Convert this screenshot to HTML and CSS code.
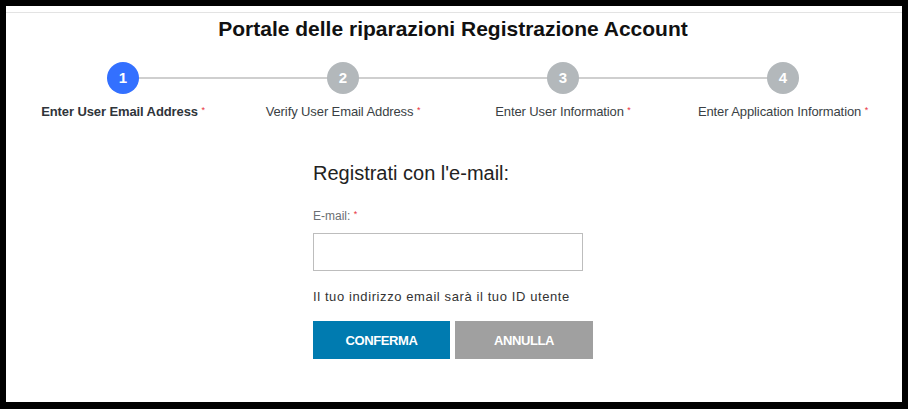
FILE: index.html
```html
<!DOCTYPE html>
<html lang="it">
<head>
<meta charset="utf-8">
<title>Registrazione Account</title>
<link rel="stylesheet" href="styles.css">
</head>
<body>
<div class="frame">
  <div class="topline"></div>
  <h1 class="title">Portale delle riparazioni Registrazione Account</h1>
  <div class="steps">
    <div class="track"></div>
    <div class="step active">
      <div class="circle">1</div>
      <div class="label">Enter User Email Address <span class="req">*</span></div>
    </div>
    <div class="step">
      <div class="circle">2</div>
      <div class="label">Verify User Email Address <span class="req">*</span></div>
    </div>
    <div class="step">
      <div class="circle">3</div>
      <div class="label">Enter User Information <span class="req">*</span></div>
    </div>
    <div class="step">
      <div class="circle">4</div>
      <div class="label">Enter Application Information <span class="req">*</span></div>
    </div>
  </div>
  <form class="form">
    <h2 class="form-title">Registrati con l'e-mail:</h2>
    <label class="field-label" for="email">E-mail: <span class="req">*</span></label>
    <input class="field-input" id="email" type="text">
    <p class="hint">Il tuo indirizzo email sarà il tuo ID utente</p>
    <div class="buttons">
      <button type="button" class="btn btn-primary">CONFERMA</button>
      <button type="button" class="btn btn-secondary">ANNULLA</button>
    </div>
  </form>
</div>
</body>
</html>
```
FILE: styles.css
```css
html, body {
  margin: 0;
  padding: 0;
  background: #000;
}
body {
  padding: 6px 6px 7px 6px;
  font-family: "Liberation Sans", Arial, sans-serif;
}
.frame {
  background: #fff;
  height: 396px;
  padding-top: 6px;
  box-sizing: border-box;
}
.topline {
  height: 1px;
  background: #e3e3e3;
}
.content {
  padding-right: 2px;
}
.title {
  margin: 3px 2px 0 0;
  font-size: 21px;
  line-height: 25px;
  font-weight: bold;
  color: #111;
  text-align: center;
}
.steps {
  position: relative;
  display: grid;
  grid-template-columns: repeat(4, 1fr);
  margin: 21px 9px 0 7px;
}
.track {
  position: absolute;
  top: 15px;
  left: 12.5%;
  right: 12.5%;
  height: 2px;
  background: #cfcfcf;
}
.step {
  position: relative;
  display: flex;
  flex-direction: column;
  align-items: center;
}
.circle {
  width: 32px;
  height: 32px;
  border-radius: 50%;
  background: #b3b8bb;
  color: #fff;
  font-size: 15px;
  font-weight: bold;
  line-height: 32px;
  text-align: center;
}
.step.active .circle {
  background: #3370ff;
}
.label {
  margin-top: 9px;
  font-size: 13px;
  line-height: 15px;
  color: #3a3f44;
  white-space: nowrap;
  letter-spacing: -0.1px;
}
.step.active .label {
  font-weight: bold;
  color: #2f343a;
}
.req {
  color: #e8323c;
  font-size: 9px;
  vertical-align: 3px;
  font-weight: normal;
}
.form {
  width: 280px;
  margin: 42px auto 0 auto;
  padding-right: 2px;
}
.form-title {
  margin: 0;
  font-size: 20px;
  line-height: 24px;
  font-weight: normal;
  color: #222;
}
.field-label {
  display: block;
  margin-top: 22px;
  font-size: 12px;
  line-height: 14px;
  color: #6b6f73;
}
.field-input {
  display: block;
  margin-top: 10px;
  width: 270px;
  height: 38px;
  box-sizing: border-box;
  border: 1px solid #bdbdbd;
  outline: none;
  padding: 0 8px;
}
.hint {
  margin: 18px 0 0 0;
  font-size: 13px;
  line-height: 16px;
  color: #333;
  letter-spacing: 0.6px;
}
.buttons {
  display: flex;
  gap: 5px;
  margin-top: 16px;
}
.btn {
  height: 38px;
  border: none;
  color: #fff;
  font-family: "Liberation Sans", Arial, sans-serif;
  font-size: 13px;
  font-weight: bold;
  letter-spacing: -0.4px;
  padding: 0;
}
.btn-primary {
  width: 137px;
  background: #007bb0;
}
.btn-secondary {
  width: 138px;
  background: #a0a0a0;
}
```
